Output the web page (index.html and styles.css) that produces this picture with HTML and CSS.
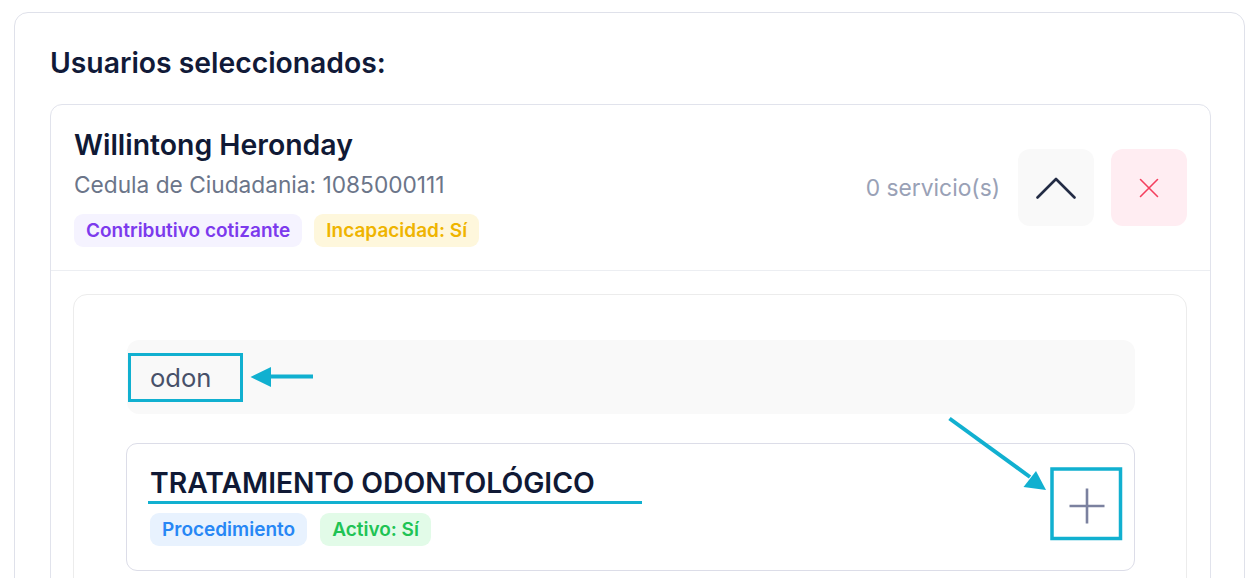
FILE: index.html
```html
<!DOCTYPE html>
<html lang="es">
<head>
<meta charset="utf-8">
<title>Usuarios seleccionados</title>
<link rel="stylesheet" href="styles.css">
</head>
<body>
<div class="panel">
  <h2 class="panel-title">Usuarios seleccionados:</h2>
  <div class="user-card">
    <div class="user-head">
      <div class="user-info">
        <div class="user-name">Willintong Heronday</div>
        <div class="user-doc">Cedula de Ciudadania: 1085000111</div>
        <div class="badges">
          <span class="badge badge-purple">Contributivo cotizante</span>
          <span class="badge badge-yellow">Incapacidad: Sí</span>
        </div>
      </div>
      <div class="user-actions">
        <span class="svc-count">0 servicio(s)</span>
        <button class="icon-btn btn-gray" type="button" aria-label="Colapsar">
          <svg width="40" height="22" viewBox="0 0 40 22"><path d="M1.5 20.5 L20 2 L38.5 20.5" fill="none" stroke="#232c45" stroke-width="2.6" stroke-linecap="round" stroke-linejoin="round"/></svg>
        </button>
        <button class="icon-btn btn-red" type="button" aria-label="Eliminar">
          <svg width="20" height="20" viewBox="0 0 20 20"><path d="M1.5 1.5 L18.5 18.5 M18.5 1.5 L1.5 18.5" fill="none" stroke="#f43f5e" stroke-width="1.6" stroke-linecap="round"/></svg>
        </button>
      </div>
    </div>
    <div class="user-body">
      <div class="services">
        <div class="search-box"><span class="search-text">odon</span></div>
        <div class="result-card">
          <div class="result-info">
            <div class="result-title">TRATAMIENTO ODONTOLÓGICO</div>
            <div class="badges result-badges">
              <span class="badge badge-blue">Procedimiento</span>
              <span class="badge badge-green">Activo: Sí</span>
            </div>
          </div>
          <button class="add-btn" type="button" aria-label="Agregar">
            <svg width="36" height="36" viewBox="0 0 36 36"><path d="M18 0.5 V35.5 M0.5 18 H35.5" fill="none" stroke="#7b819f" stroke-width="2.6"/></svg>
          </button>
        </div>
      </div>
    </div>
  </div>
</div>
<svg class="annotations" width="1259" height="578" viewBox="0 0 1259 578">
  <rect x="129.5" y="354.5" width="112" height="46" fill="none" stroke="#11b0d0" stroke-width="3"/>
  <path d="M268 376.5 H313" stroke="#11b0d0" stroke-width="4"/>
  <path d="M250.5 377 L271 367 L271 387 Z" fill="#11b0d0"/>
  <path d="M148 502.5 H642" stroke="#11b0d0" stroke-width="3"/>
  <rect x="1052" y="469" width="68.5" height="69.5" fill="none" stroke="#11b0d0" stroke-width="3.5"/>
  <path d="M949.5 418.5 L1030 477" stroke="#11b0d0" stroke-width="4"/>
  <path d="M1046 490 L1023.5 487 L1036 471 Z" fill="#11b0d0"/>
</svg>
</body>
</html>
```

FILE: styles.css
```css
* { box-sizing: border-box; }

html, body {
  margin: 0;
  padding: 0;
  background: #ffffff;
  overflow: hidden;
}

body {
  font-family: Inter, "Noto Sans", sans-serif;
  color: #101935;
  position: relative;
  height: 578px;
}

.panel {
  margin: 12px 14px 0 14px;
  border: 1px solid #dfe1ea;
  border-radius: 14px;
  padding: 33px 33px 40px 35px;
  min-height: 700px;
}

.panel-title {
  margin: 0;
  font-size: 28.3px;
  line-height: 34px;
  font-weight: 600;
  color: #111a38;
}

.user-card {
  margin-top: 24px;
  border: 1px solid #e1e3ec;
  border-radius: 12px;
  min-height: 600px;
}

.user-head {
  display: flex;
  align-items: center;
  justify-content: space-between;
  padding: 23px 23px 23px 23px;
  border-bottom: 1px solid #eceef2;
}

.user-name {
  font-size: 28.4px;
  line-height: 34px;
  font-weight: 600;
  color: #101935;
}

.user-doc {
  margin-top: 9px;
  font-size: 22.7px;
  line-height: 28px;
  color: #6b7589;
}

.badges {
  display: flex;
  gap: 12px;
  margin-top: 15px;
}

.badge {
  display: inline-flex;
  align-items: center;
  height: 33px;
  padding: 0 12px;
  border-radius: 9px;
  font-size: 19px;
  font-weight: 600;
}

.badge-purple { background: #f5f3ff; color: #7c3aed; }
.badge-yellow { background: #fef7dc; color: #efb400; }
.badge-blue { background: #e8f2fe; color: #2787f5; }
.badge-green { background: #e2fbe8; color: #20c354; }

.user-actions {
  display: flex;
  align-items: center;
  gap: 17px;
}

.svc-count {
  font-size: 22.8px;
  color: #99a1b6;
  margin-right: 1px;
}

.icon-btn {
  width: 76px;
  height: 77px;
  border: none;
  border-radius: 12px;
  display: flex;
  align-items: center;
  justify-content: center;
  padding: 0;
}

.btn-gray { background: #f9f9f9; }
.btn-red { background: #ffedf2; }

.user-body {
  padding: 23px 23px 0 22px;
}

.services {
  border: 1px solid #ececec;
  border-radius: 14px;
  padding: 45px 51px 40px 53px;
  min-height: 400px;
}

.search-box {
  height: 74px;
  background: #f9f9f9;
  border-radius: 12px;
  display: flex;
  align-items: center;
  padding: 0 23px;
}

.search-text {
  font-size: 25.6px;
  color: #475069;
}

.result-card {
  margin-top: 29px;
  margin-left: -1px;
  border: 1px solid #dcdde8;
  border-radius: 11px;
  display: flex;
  align-items: center;
  justify-content: space-between;
  padding: 22px 23px 24px 23px;
}

.result-title {
  font-size: 28.3px;
  line-height: 34px;
  font-weight: 600;
  color: #101935;
}

.result-badges {
  margin-top: 13px;
  gap: 13px;
}

.add-btn {
  width: 48px;
  height: 48px;
  border: none;
  background: transparent;
  display: flex;
  align-items: center;
  justify-content: center;
  padding: 0;
}

.annotations {
  position: absolute;
  left: 0;
  top: 0;
  pointer-events: none;
}
```
